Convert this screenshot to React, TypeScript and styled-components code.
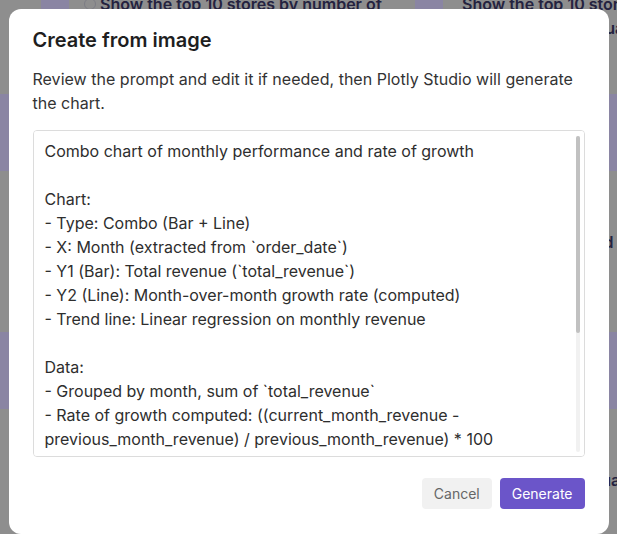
import React, { useEffect, useRef, useState } from "react";
import styled, { createGlobalStyle } from "styled-components";

const Global = createGlobalStyle`
  html, body { margin: 0; padding: 0; }
  body { font-family: Inter, "Noto Sans", sans-serif; overflow: hidden; }
  * { box-sizing: border-box; }
`;

/* ---------- dimmed page behind the dialog ---------- */
const Page = styled.div`
  height: 100vh;
  overflow: hidden;
  background: #8e8e8e;
  display: flex;
  flex-direction: column;
  margin-top: -8px;
`;

const Row = styled.section`
  flex: 0 0 238px;
  display: flex;
  flex-direction: column;
`;

const Heads = styled.div`
  height: 102px;
  display: grid;
  grid-template-columns: 374px 374px;
  padding-left: 41px;
`;

const Head = styled.div`
  display: flex;
  align-items: flex-start;
  gap: 19px;
  height: 100%;
`;

const Thumb = styled.div`
  flex: 0 0 28px;
  align-self: stretch;
  background: #8a85a3;
`;

const Mark = styled.span`
  flex: 0 0 12px;
  height: 12px;
  margin: 6px -15px 0 -4px;
  border: 1px solid #7d7d85;
  border-radius: 50%;
`;

const CardTitle = styled.div`
  font-size: 16px;
  line-height: 24px;
  font-weight: 600;
  color: #24223f;
  width: 330px;
  white-space: nowrap;
`;

const Band = styled.div`
  height: 77px;
  background: #8a85a3;
`;

/* ---------- dialog ---------- */
const Overlay = styled.div`
  position: fixed;
  inset: 0;
  display: flex;
  align-items: center;
  justify-content: center;
`;

const Dialog = styled.div`
  width: 600px;
  background: #ffffff;
  border-radius: 12px;
  padding: 19px 24px 25px 24px;
  display: flex;
  flex-direction: column;
`;

const Title = styled.h2`
  margin: 0 0 15px 0;
  font-size: 20px;
  line-height: 24px;
  font-weight: 600;
  color: #1f1f1f;
`;

const Description = styled.p`
  margin: 0 0 15px 0;
  font-size: 16px;
  line-height: 24px;
  letter-spacing: 0.02px;
  color: #333333;
`;

const PromptBox = styled.div`
  position: relative;
  height: 327px;
`;

const Prompt = styled.textarea`
  display: block;
  width: 100%;
  height: 100%;
  margin: 0;
  resize: none;
  border: 1px solid #dcdcdc;
  border-radius: 4px;
  padding: 8px 16px 8px 11px;
  font-family: Inter, "Noto Sans", sans-serif;
  font-size: 16px;
  line-height: 24px;
  color: #2e2e2e;
  background: #ffffff;
  outline: none;
  overflow-y: auto;
  scrollbar-width: none;
  &::-webkit-scrollbar {
    display: none;
  }
`;

const ScrollTrack = styled.div`
  position: absolute;
  top: 6px;
  bottom: 5px;
  right: 5px;
  width: 4px;
  border-radius: 2px;
  background: #f1f1f1;
  pointer-events: none;
`;

const ScrollThumb = styled.div`
  position: absolute;
  left: 0;
  right: 0;
  border-radius: 2px;
  background: #c1c1c1;
`;

const Actions = styled.div`
  margin-top: 21px;
  display: flex;
  justify-content: flex-end;
  gap: 8px;
`;

const Button = styled.button<{ $primary?: boolean }>`
  height: 31px;
  padding: 0 12px;
  border: none;
  border-radius: 4px;
  font-family: Inter, "Noto Sans", sans-serif;
  font-size: 14px;
  font-weight: 400;
  cursor: pointer;
  background: ${(p) => (p.$primary ? "#6b55c9" : "#f1f1f1")};
  color: ${(p) => (p.$primary ? "#ffffff" : "#666666")};
`;

const promptText = `Combo chart of monthly performance and rate of growth

Chart:
- Type: Combo (Bar + Line)
- X: Month (extracted from \`order_date\`)
- Y1 (Bar): Total revenue (\`total_revenue\`)
- Y2 (Line): Month-over-month growth rate (computed)
- Trend line: Linear regression on monthly revenue

Data:
- Grouped by month, sum of \`total_revenue\`
- Rate of growth computed: ((current_month_revenue - previous_month_revenue) / previous_month_revenue) * 100
- First month growth rate shown as N/A

Layout:
- Bars on the left y-axis (revenue in dollars)
- Line on the right y-axis (growth rate in %)
- Trend line drawn as a dashed line
- Legend at the top
- Hover shows month, revenue and growth rate`;

const cards: { lines: [string, string]; mark: boolean }[][] = [
  [
    { lines: ["Show the top 10 stores by number of", "orders"], mark: true },
    { lines: ["Show the top 10 stores by number of", "orders in the last quarter"], mark: false },
  ],
  [
    { lines: ["Average order value by store category", "and segment"], mark: true },
    { lines: ["Sales by region and product segments", "this year"], mark: false },
  ],
  [
    { lines: ["Total revenue by month and store type", "Filtered by region"], mark: true },
    { lines: ["Forecast of next quarter revenue", "Filtered by store"], mark: false },
  ],
];

function useScrollThumb(ref: React.RefObject<HTMLTextAreaElement | null>) {
  const [m, setM] = useState({ ratio: 0.61, pos: 0 });
  useEffect(() => {
    const el = ref.current;
    if (!el) return;
    const update = () => {
      const ratio = Math.min(1, el.clientHeight / el.scrollHeight);
      const max = el.scrollHeight - el.clientHeight;
      setM({ ratio, pos: max > 0 ? el.scrollTop / max : 0 });
    };
    update();
    el.addEventListener("scroll", update);
    el.addEventListener("input", update);
    return () => {
      el.removeEventListener("scroll", update);
      el.removeEventListener("input", update);
    };
  }, [ref]);
  return m;
}

export default function App() {
  const areaRef = useRef<HTMLTextAreaElement>(null);
  const { ratio, pos } = useScrollThumb(areaRef);
  return (
    <>
      <Global />
      <Page>
        {cards.map((pair, i) => (
          <Row key={i}>
            <Heads>
              {pair.map((c, j) => (
                <Head key={j}>
                  <Thumb />
                  {c.mark && <Mark />}
                  <CardTitle>
                    {c.lines[0]}
                    <br />
                    {c.lines[1]}
                  </CardTitle>
                </Head>
              ))}
            </Heads>
            <Band />
          </Row>
        ))}
      </Page>
      <Overlay>
        <Dialog role="dialog" aria-labelledby="dlg-title">
          <Title id="dlg-title">Create from image</Title>
          <Description>
            Review the prompt and edit it if needed, then Plotly Studio will generate the chart.
          </Description>
          <PromptBox>
            <Prompt ref={areaRef} defaultValue={promptText} spellCheck={false} />
            {ratio < 1 && (
              <ScrollTrack>
                <ScrollThumb
                  style={{
                    height: `${ratio * 100}%`,
                    top: `${pos * (1 - ratio) * 100}%`,
                  }}
                />
              </ScrollTrack>
            )}
          </PromptBox>
          <Actions>
            <Button>Cancel</Button>
            <Button $primary>Generate</Button>
          </Actions>
        </Dialog>
      </Overlay>
    </>
  );
}
